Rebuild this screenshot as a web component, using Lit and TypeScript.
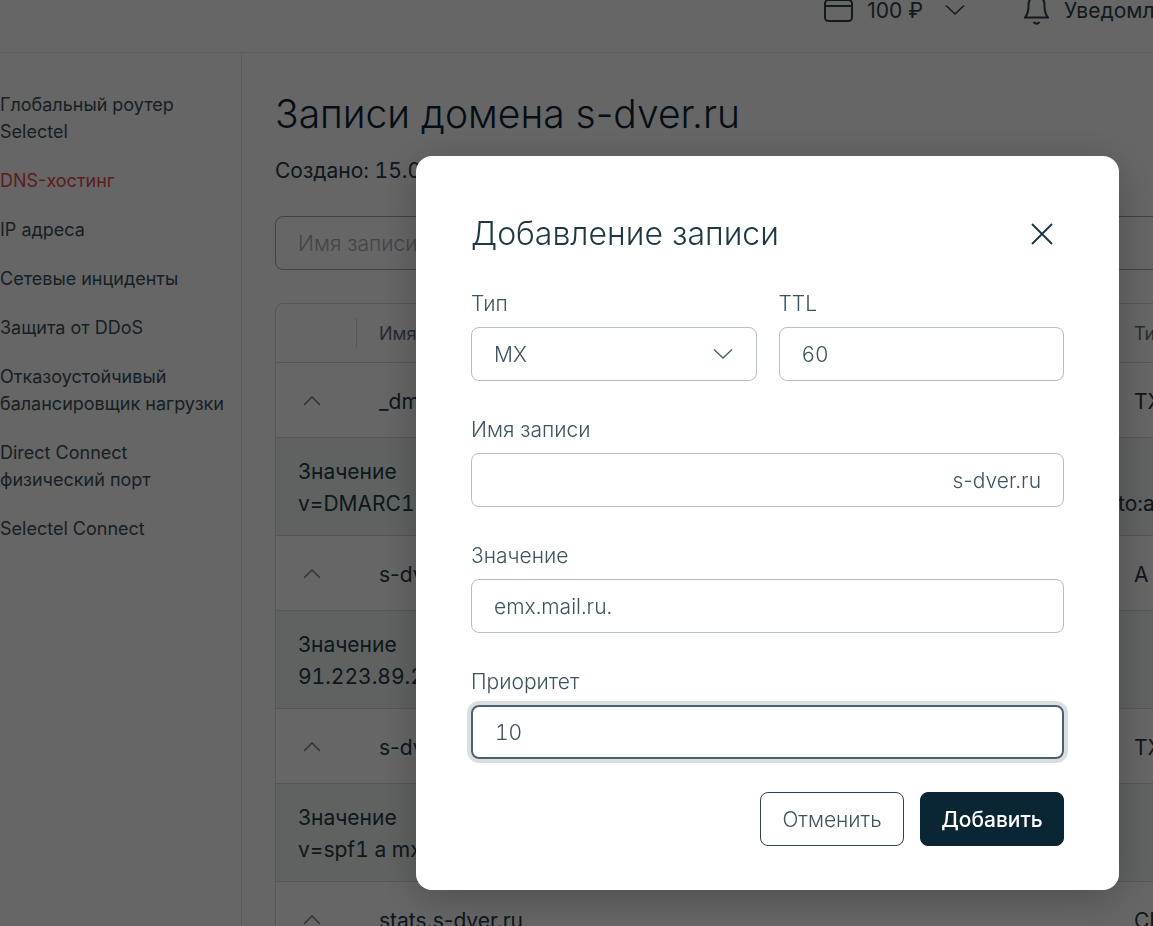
import { LitElement, html, svg, css } from "lit";
import { customElement, property } from "lit/decorators.js";
import { classMap } from "lit/directives/class-map.js";

interface DnsRecord {
  name: string;
  type: string;
  value: string;
  tail?: string;
}

const NAV: { label: string; active?: boolean }[] = [
  { label: "Глобальный роутер Selectel" },
  { label: "DNS-хостинг", active: true },
  { label: "IP адреса" },
  { label: "Сетевые инциденты" },
  { label: "Защита от DDoS" },
  { label: "Отказоустойчивый балансировщик нагрузки" },
  { label: "Direct Connect физический порт" },
  { label: "Selectel Connect" },
];

const RECORDS: DnsRecord[] = [
  { name: "_dmarc", type: "TXT", value: "v=DMARC1", tail: "to:a" },
  { name: "s-dver.ru", type: "A", value: "91.223.89.2" },
  { name: "s-dver.ru", type: "TXT", value: "v=spf1 a mx" },
  { name: "stats.s-dver.ru", type: "CNAME", value: "" },
];

const chevron = (down: boolean) => html`
  <svg class="chevron" viewBox="0 0 20 12" width="20" height="12" aria-hidden="true">
    ${down ? svg`<path d="M1 1.5 L10 10 L19 1.5" />` : svg`<path d="M2 10 L10 2 L18 10" />`}
  </svg>
`;

@customElement("top-bar")
export class TopBar extends LitElement {
  static styles = css`
    :host {
      display: flex;
      justify-content: flex-end;
      align-items: flex-start;
      height: 52px;
      border-bottom: 1px solid #e1e5e8;
    }
    .item {
      display: flex;
      align-items: flex-start;
      height: 26px;
      padding: 0;
      border: 0;
      background: none;
      color: #2c414d;
      font: inherit;
      line-height: 22px;
      white-space: nowrap;
      overflow: hidden;
    }
    .balance {
      gap: 13px;
      margin-right: 59px;
    }
    .notices {
      gap: 15px;
      width: 129px;
    }
    svg {
      flex: none;
      fill: none;
      stroke: #2c414d;
      stroke-width: 2;
    }
    .chevron {
      margin: 4px 0 0 9px;
      stroke-width: 1.5;
    }
  `;

  render() {
    return html`
      <button class="item balance">
        <svg viewBox="0 0 30 26" width="30" height="26" aria-hidden="true">
          <rect x="1" y="0" width="27" height="21" rx="3.5" />
          <path d="M2 6 H28" />
        </svg>
        <span>100 ₽</span>
        ${chevron(true)}
      </button>
      <button class="item notices">
        <svg viewBox="0 0 25 26" width="25" height="26" aria-hidden="true">
          <path d="M1 17.500 H24 C21 14 20.500 11 20.500 6 C20.500 -1 17 -4 12.500 -4 C8 -4 4.500 -1 4.500 6 C4.500 11 4 14 1 17.500 Z" />
          <path d="M9.500 22 Q12.500 25.500 15.500 22" />
        </svg>
        <span>Уведомления</span>
      </button>
    `;
  }
}

@customElement("side-nav")
export class SideNav extends LitElement {
  static styles = css`
    :host {
      flex: none;
      width: 241px;
      border-right: 1px solid #e1e5e8;
      box-sizing: content-box;
    }
    .list {
      display: flex;
      flex-direction: column;
      gap: 22px;
      margin: 0;
      padding: 38px 8px 0 0;
      list-style: none;
    }
    .link {
      display: block;
      color: #3b4f5a;
      font-size: 18px;
      line-height: 27px;
      text-decoration: none;
    }
    .active {
      color: #e5484d;
    }
  `;

  render() {
    return html`
      <nav>
        <ul class="list">
          ${NAV.map(
            (n) => html`<li><a href="#" class=${classMap({ link: true, active: !!n.active })}>${n.label}</a></li>`
          )}
        </ul>
      </nav>
    `;
  }
}

@customElement("records-page")
export class RecordsPage extends LitElement {
  static styles = css`
    :host {
      display: block;
      flex: 1;
      min-width: 0;
      padding: 32px 0 0 33px;
      overflow: hidden;
    }
    .title {
      margin: 0;
      color: #0a2533;
      font-size: 39px;
      line-height: 58px;
      font-weight: 300;
    }
    .created {
      margin: 12px 0 29px;
      line-height: 32px;
      font-variant-numeric: tabular-nums;
    }
    .search {
      display: block;
      box-sizing: border-box;
      width: calc(100% + 40px);
      height: 54px;
      padding: 0 22px;
      border: 1px solid #9aa7ae;
      border-radius: 8px;
      background: #fff;
      font: inherit;
      font-weight: 300;
    }
    .search::placeholder {
      color: #a5adb2;
      opacity: 1;
    }
    .frame {
      width: calc(100% + 160px);
      margin-top: 33px;
      border: 1px solid #d2d8db;
      border-radius: 8px 8px 0 0;
      box-sizing: border-box;
    }
    .records {
      width: 100%;
      table-layout: fixed;
      border-collapse: collapse;
    }
    .col-toggle {
      width: 81px;
    }
    .col-type {
      width: 200px;
    }
    th,
    td {
      padding: 0 22px;
      text-align: left;
      font-weight: 400;
      white-space: nowrap;
    }
    th {
      height: 58px;
      color: #5d6d76;
      font-size: 18px;
    }
    .rule {
      display: block;
      height: 30px;
      margin-right: -22px;
      border-right: 1px solid #d2d8db;
    }
    .record td {
      height: 72px;
      padding-top: 2px;
      border-top: 1px solid #d2d8db;
    }
    .detail td {
      padding-top: 18px;
      padding-bottom: 15px;
      border-top: 1px solid #d2d8db;
      background: #f0f6f5;
      line-height: 32px;
      font-variant-numeric: tabular-nums;
    }
    .detail .tail {
      padding-left: 6px;
      vertical-align: bottom;
    }
    .toggle {
      display: block;
      padding: 0 4px;
      border: 0;
      background: none;
    }
    .chevron {
      display: block;
      fill: none;
      stroke: #71808a;
      stroke-width: 1.5;
    }
  `;

  render() {
    return html`
      <h1 class="title">Записи домена s-dver.ru</h1>
      <p class="created">Создано: 15.0</p>
      <input class="search" type="search" placeholder="Имя записи" aria-label="Имя записи" />
      <div class="frame">
        <table class="records">
          <colgroup>
            <col class="col-toggle" />
            <col />
            <col class="col-type" />
          </colgroup>
          <thead>
            <tr>
              <th><span class="rule"></span></th>
              <th>Имя</th>
              <th>Тип</th>
            </tr>
          </thead>
          <tbody>
            ${RECORDS.map(
              (r) => html`
                <tr class="record">
                  <td><button class="toggle" aria-label="Свернуть">${chevron(false)}</button></td>
                  <td>${r.name}</td>
                  <td>${r.type}</td>
                </tr>
                ${r.value
                  ? html`<tr class="detail">
                      <td colspan="2">Значение<br />${r.value}</td>
                      <td class="tail">${r.tail ?? ""}</td>
                    </tr>`
                  : ""}
              `
            )}
          </tbody>
        </table>
      </div>
    `;
  }
}

@customElement("record-dialog")
export class RecordDialog extends LitElement {
  @property() domain = "s-dver.ru";

  static styles = css`
    :host {
      position: fixed;
      inset: 0;
      display: flex;
      justify-content: flex-end;
      align-items: flex-start;
      padding: 156px 34px 0 0;
      background: rgba(0, 0, 0, 0.6);
      font-weight: 300;
    }
    .dialog {
      box-sizing: border-box;
      width: 703px;
      max-width: 100%;
      padding: 52px 55px 44px;
      border-radius: 16px;
      background: #fff;
      box-shadow: 0 8px 40px rgba(0, 0, 0, 0.25);
    }
    .head {
      display: flex;
      justify-content: space-between;
      align-items: center;
      margin-bottom: 30px;
    }
    .title {
      margin: 0;
      color: #1f3846;
      font-size: 32px;
      line-height: 52px;
      font-weight: 300;
    }
    .close {
      display: flex;
      padding: 11px;
      border: 0;
      background: none;
    }
    svg {
      fill: none;
      stroke: #1f3846;
      stroke-width: 2;
    }
    .fields {
      display: grid;
      grid-template-columns: repeat(2, minmax(0, 1fr));
      gap: 35px 22px;
    }
    .field {
      display: flex;
      flex-direction: column;
      gap: 9px;
    }
    .wide {
      grid-column: 1 / -1;
    }
    .label {
      color: #3d535f;
      line-height: 28px;
    }
    .box {
      position: relative;
      display: flex;
      align-items: center;
      box-sizing: border-box;
      height: 54px;
      border: 1px solid #b5bec4;
      border-radius: 8px;
      color: #3d535f;
    }
    .focused {
      border: 2px solid #4a606d;
      box-shadow: 0 0 0 4px #d9dee2;
    }
    .control {
      flex: 1;
      min-width: 0;
      height: 100%;
      padding: 0 22px;
      border: 0;
      border-radius: 8px;
      outline: 0;
      background: none;
      color: inherit;
      font: inherit;
      font-variant-numeric: tabular-nums;
      appearance: none;
    }
    .suffix {
      padding-right: 22px;
    }
    .box .chevron {
      position: absolute;
      right: 23px;
      pointer-events: none;
      stroke: #4a606d;
      stroke-width: 1.5;
    }
    .actions {
      display: flex;
      justify-content: flex-end;
      gap: 16px;
      margin-top: 33px;
    }
    .button {
      box-sizing: border-box;
      width: 144px;
      height: 54px;
      padding: 0;
      border: 1px solid #2c4351;
      border-radius: 8px;
      background: #fff;
      color: #3d535f;
      font: inherit;
    }
    .primary {
      border-color: #0a2533;
      background: #0a2533;
      color: #fff;
      font-weight: 500;
    }
  `;

  render() {
    return html`
      <section class="dialog" role="dialog" aria-modal="true" aria-labelledby="title">
        <header class="head">
          <h2 class="title" id="title">Добавление записи</h2>
          <button class="close" aria-label="Закрыть">
            <svg viewBox="0 0 22 22" width="22" height="22"><path d="M1 1 L21 21 M21 1 L1 21" /></svg>
          </button>
        </header>
        <form class="form">
          <div class="fields">
            <div class="field">
              <label class="label" for="type">Тип</label>
              <div class="box">
                <select class="control" id="type">
                  <option>MX</option>
                </select>
                ${chevron(true)}
              </div>
            </div>
            <div class="field">
              <label class="label" for="ttl">TTL</label>
              <div class="box"><input class="control" id="ttl" value="60" /></div>
            </div>
            <div class="field wide">
              <label class="label" for="name">Имя записи</label>
              <div class="box">
                <input class="control" id="name" />
                <span class="suffix">${this.domain}</span>
              </div>
            </div>
            <div class="field wide">
              <label class="label" for="value">Значение</label>
              <div class="box"><input class="control" id="value" value="emx.mail.ru." /></div>
            </div>
            <div class="field wide">
              <label class="label" for="priority">Приоритет</label>
              <div class="box focused"><input class="control" id="priority" value="10" /></div>
            </div>
          </div>
          <div class="actions">
            <button class="button" type="button">Отменить</button>
            <button class="button primary" type="button">Добавить</button>
          </div>
        </form>
      </section>
    `;
  }
}

@customElement("app-root")
export class AppRoot extends LitElement {
  static styles = css`
    :host {
      display: flex;
      flex-direction: column;
      height: 100vh;
      overflow: hidden;
      background: #fff;
      color: #223a47;
      font-family: Inter, "Liberation Sans", sans-serif;
      font-size: 21px;
      font-weight: 400;
    }
    .body {
      display: flex;
      flex: 1;
      min-height: 0;
    }
  `;

  render() {
    return html`
      <top-bar></top-bar>
      <div class="body">
        <side-nav></side-nav>
        <records-page></records-page>
      </div>
      <record-dialog></record-dialog>
    `;
  }
}
